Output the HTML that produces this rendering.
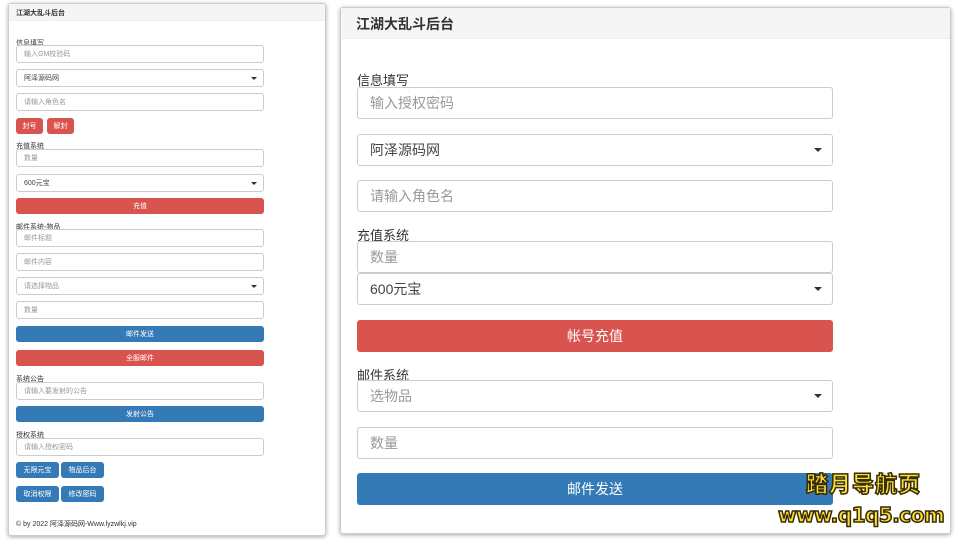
<!DOCTYPE html>
<html><head><meta charset="utf-8"><style>
*{box-sizing:border-box;margin:0;padding:0}
body{width:960px;height:540px;background:#fff;position:relative;overflow:hidden;font-family:"Liberation Sans","Noto Sans CJK SC",sans-serif;color:#333}
.p{position:absolute;background:#fff;border:1px solid #ccc;box-shadow:0 1px 4px rgba(0,0,0,.35);border-radius:3px}
.h{position:absolute;left:0;right:0;top:0;background:#f5f5f5;border-bottom:1px solid #eee}
.a{position:absolute}
.i{position:absolute;border:1px solid #ccc;border-radius:3px;background:#fff;color:#999;display:flex;align-items:center}
.s{color:#444}
.s:after{content:"";position:absolute;border-left:4px solid transparent;border-right:4px solid transparent;border-top:4px solid #333}
.b{position:absolute;color:#fff;display:flex;align-items:center;justify-content:center;border-radius:3px}
.r{background:#d9534f}.bl{background:#337ab7}
.L .i{left:16px;width:248px;height:18px;font-size:7px;padding-left:7px}
.L .s:after{right:6px;top:7px;border-width:3px 3px 0 3px}
.L .a{font-size:7px;left:16px}
.L .b{font-size:7px;height:16px}
.R .i{left:357px;width:476px;height:32px;font-size:14px;padding-left:12px}
.R .s:after{right:10px;top:13px}
.R .a{font-size:13px;left:357px}
.R .b{font-size:14px;height:32px}
</style></head><body>
<div class="L">
<div class="p" style="left:8px;top:3px;width:318px;height:533px"><div class="h" style="height:17px"></div></div>
<div class="a" style="top:8px;font-weight:bold">江湖大乱斗后台</div>
<div class="a" style="top:38px">信息填写</div>
<div class="i" style="top:45px">输入GM校验码</div>
<div class="i s" style="top:69px">阿泽源码网</div>
<div class="i" style="top:93px">请输入角色名</div>
<div class="b r" style="left:16px;top:118px;width:27px">封号</div>
<div class="b r" style="left:47px;top:118px;width:27px">解封</div>
<div class="a" style="top:141px">充值系统</div>
<div class="i" style="top:149px">数量</div>
<div class="i s" style="top:174px">600元宝</div>
<div class="b r" style="left:16px;top:198px;width:248px">充值</div>
<div class="a" style="top:222px">邮件系统-物品</div>
<div class="i" style="top:229px">邮件标题</div>
<div class="i" style="top:253px">邮件内容</div>
<div class="i s" style="top:277px;color:#999">请选择物品</div>
<div class="i" style="top:301px">数量</div>
<div class="b bl" style="left:16px;top:326px;width:248px">邮件发送</div>
<div class="b r" style="left:16px;top:350px;width:248px">全服邮件</div>
<div class="a" style="top:374px">系统公告</div>
<div class="i" style="top:382px">请输入要发射的公告</div>
<div class="b bl" style="left:16px;top:406px;width:248px">发射公告</div>
<div class="a" style="top:430px">授权系统</div>
<div class="i" style="top:438px">请输入授权密码</div>
<div class="b bl" style="left:16px;top:462px;width:43px">无限元宝</div>
<div class="b bl" style="left:61px;top:462px;width:43px">物品后台</div>
<div class="b bl" style="left:16px;top:486px;width:43px">取消权限</div>
<div class="b bl" style="left:61px;top:486px;width:43px">修改密码</div>
<div class="a" style="top:519px">© by 2022 阿泽源码网-Www.lyzwlkj.vip</div>
</div>
<div class="R">
<div class="p" style="left:340px;top:7px;width:611px;height:527px"><div class="h" style="height:31px"></div></div>
<div class="a" style="top:14px;left:356px;font-weight:bold;font-size:14px">江湖大乱斗后台</div>
<div class="a" style="top:70px">信息填写</div>
<div class="i" style="top:87px">输入授权密码</div>
<div class="i s" style="top:134px">阿泽源码网</div>
<div class="i" style="top:180px">请输入角色名</div>
<div class="a" style="top:225px">充值系统</div>
<div class="i" style="top:241px">数量</div>
<div class="i s" style="top:273px">600元宝</div>
<div class="b r" style="left:357px;top:320px;width:476px">帐号充值</div>
<div class="a" style="top:365px">邮件系统</div>
<div class="i s" style="top:380px;color:#999">选物品</div>
<div class="i" style="top:427px">数量</div>
<div class="b bl" style="left:357px;top:473px;width:476px">邮件发送</div>
</div>
<div style="position:absolute;left:806px;top:467px;font-size:22px;font-weight:900;color:#f7e03a;-webkit-text-stroke:1.5px #3a2a00;letter-spacing:1px;font-family:'Noto Sans CJK SC',sans-serif">踏月导航页</div>
<div style="position:absolute;left:778px;top:503px;font-size:20px;font-weight:900;color:#f7e03a;-webkit-text-stroke:1.5px #3a2a00;font-family:'DejaVu Sans',sans-serif;letter-spacing:-0.5px">www.q1q5.com</div>
</body></html>
